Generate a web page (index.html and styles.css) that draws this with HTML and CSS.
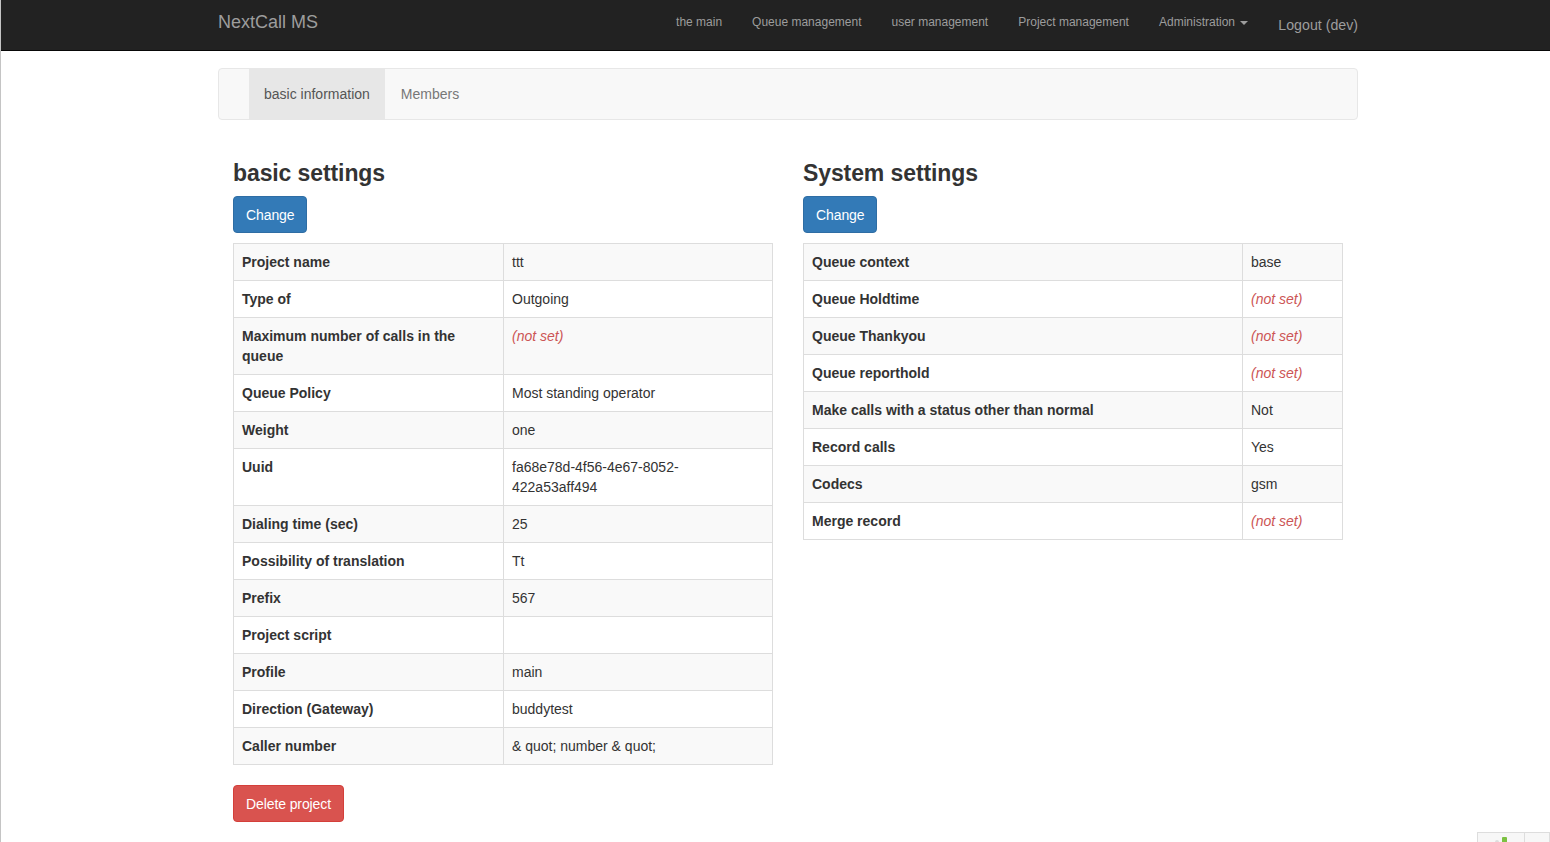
FILE: index.html
```html
<!DOCTYPE html>
<html>
<head>
<meta charset="utf-8">
<link rel="stylesheet" href="styles.css">
</head>
<body>
<div class="edge"></div>
<nav class="topbar">
  <div class="wrap topbar-inner">
    <a class="brand">NextCall MS</a>
    <ul class="menu">
      <li><a>the main</a></li>
      <li><a>Queue management</a></li>
      <li><a>user management</a></li>
      <li><a>Project management</a></li>
      <li><a>Administration <span class="caret"></span></a></li>
      <li class="logout"><a>Logout (dev)</a></li>
    </ul>
  </div>
</nav>
<div class="wrap">
  <div class="tabs">
    <ul class="tab-list">
      <li class="active"><a>basic information</a></li>
      <li><a>Members</a></li>
    </ul>
  </div>
  <div class="row">
    <div class="col">
      <h3>basic settings</h3>
      <p class="actions"><a class="btn btn-primary">Change</a></p>
      <table class="detail left">
        <tr><th>Project name</th><td>ttt</td></tr>
        <tr><th>Type of</th><td>Outgoing</td></tr>
        <tr><th>Maximum number of calls in the queue</th><td><span class="not-set">(not set)</span></td></tr>
        <tr><th>Queue Policy</th><td>Most standing operator</td></tr>
        <tr><th>Weight</th><td>one</td></tr>
        <tr><th>Uuid</th><td>fa68e78d-4f56-4e67-8052-<br>422a53aff494</td></tr>
        <tr><th>Dialing time (sec)</th><td>25</td></tr>
        <tr><th>Possibility of translation</th><td>Tt</td></tr>
        <tr><th>Prefix</th><td>567</td></tr>
        <tr><th>Project script</th><td></td></tr>
        <tr><th>Profile</th><td>main</td></tr>
        <tr><th>Direction (Gateway)</th><td>buddytest</td></tr>
        <tr><th>Caller number</th><td>&amp; quot; number &amp; quot;</td></tr>
      </table>
      <p class="actions delete"><a class="btn btn-danger">Delete project</a></p>
    </div>
    <div class="col">
      <h3>System settings</h3>
      <p class="actions"><a class="btn btn-primary">Change</a></p>
      <table class="detail right">
        <tr><th>Queue context</th><td>base</td></tr>
        <tr><th>Queue Holdtime</th><td><span class="not-set">(not set)</span></td></tr>
        <tr><th>Queue Thankyou</th><td><span class="not-set">(not set)</span></td></tr>
        <tr><th>Queue reporthold</th><td><span class="not-set">(not set)</span></td></tr>
        <tr><th>Make calls with a status other than normal</th><td>Not</td></tr>
        <tr><th>Record calls</th><td>Yes</td></tr>
        <tr><th>Codecs</th><td>gsm</td></tr>
        <tr><th>Merge record</th><td><span class="not-set">(not set)</span></td></tr>
      </table>
    </div>
  </div>
</div>
<div class="debug">
  <div class="debug-box">
    <svg width="14" height="10" viewBox="0 0 14 10"><circle cx="3" cy="7" r="2" fill="#ddd"/><rect x="8" y="2" width="5" height="6" rx="1" fill="#7cc142"/></svg>
  </div>
  <div class="debug-box narrow"></div>
</div>
</body>
</html>
```
FILE: styles.css
```css
* { box-sizing: border-box; }
html, body { margin: 0; padding: 0; }
body {
  font-family: "Liberation Sans", Arial, Helvetica, sans-serif;
  font-size: 14px;
  line-height: 20px;
  color: #333;
  background: #fff;
  min-height: 842px;
  position: relative;
  overflow: hidden;
}
.edge {
  position: absolute;
  left: 0; top: 0; bottom: 0;
  width: 1px;
  background: #c4c4c4;
  z-index: 5;
}
.wrap {
  width: 1140px;
  margin-left: 218px;
}
.topbar {
  background: #222;
  height: 51px;
  border-bottom: 1px solid #080808;
}
.topbar-inner {
  display: flex;
  align-items: flex-start;
  height: 50px;
}
.brand {
  font-size: 18px;
  line-height: 20px;
  color: #9d9d9d;
  padding-top: 12px;
  flex: none;
}
.menu {
  list-style: none;
  margin: 0 0 0 auto;
  padding: 0;
  display: flex;
}
.menu li a {
  display: block;
  font-size: 12px;
  line-height: 20px;
  padding: 12px 15px 0 15px;
  color: #9d9d9d;
}
.menu li:last-child a { padding-right: 0; }
.menu li.logout a {
  font-size: 14.2px;
  padding-top: 15px;
}
.caret {
  display: inline-block;
  width: 0; height: 0;
  margin-left: 2px;
  vertical-align: middle;
  border-top: 4px solid #9d9d9d;
  border-left: 4px solid transparent;
  border-right: 4px solid transparent;
}
.tabs {
  margin-top: 17px;
  height: 52px;
  background: #f8f8f8;
  border: 1px solid #e7e7e7;
  border-radius: 4px;
  margin-bottom: 20px;
  padding-left: 30px;
}
.tab-list {
  list-style: none;
  margin: 0;
  padding: 0;
  display: flex;
}
.tab-list li a {
  display: block;
  padding: 15px;
  line-height: 20px;
  color: #777;
}
.tab-list li.active a {
  background: #e7e7e7;
  color: #555;
}
.tab-list li.active + li a { padding-left: 16px; }
.row {
  display: flex;
}
.col {
  width: 570px;
  padding: 0 15px;
}
h3 {
  font-size: 23px;
  font-weight: bold;
  line-height: 26.4px;
  margin: 20px 0 10px;
  color: #333;
  letter-spacing: -0.1px;
}
.actions {
  margin: 0 0 10px;
  height: 37px;
}
.actions.delete {
  margin-top: 20px;
}
.btn {
  display: inline-block;
  height: 37px;
  padding: 8px 12px 8px 12px;
  font-size: 14px;
  line-height: 21px;
  border: 1px solid transparent;
  border-radius: 4px;
  color: #fff;
  letter-spacing: -0.1px;
}
.btn-primary { background: #337ab7; border-color: #2e6da4; }
.btn-danger { background: #d9534f; border-color: #d43f3a; }
table.detail {
  width: 540px;
  border-collapse: collapse;
  table-layout: fixed;
  border: 1px solid #ddd;
}
table.detail tr:nth-child(odd) { background: #f9f9f9; }
table.detail th, table.detail td {
  border: 1px solid #ddd;
  padding: 8px;
  text-align: left;
  vertical-align: top;
  line-height: 20px;
  height: 37px;
}
table.detail th { font-weight: bold; }
table.left th { width: 270px; }
table.right th { width: 439px; }
.not-set { color: #c55; font-style: italic; }
.debug {
  position: absolute;
  right: 0;
  top: 832px;
  display: flex;
}
.debug-box {
  width: 48px;
  height: 20px;
  border: 1px solid #ddd;
  border-bottom: none;
  background: #f7f7f7;
  display: flex;
  justify-content: center;
  padding-top: 2px;
}
.debug-box.narrow { width: 25px; border-left: none; }
```
